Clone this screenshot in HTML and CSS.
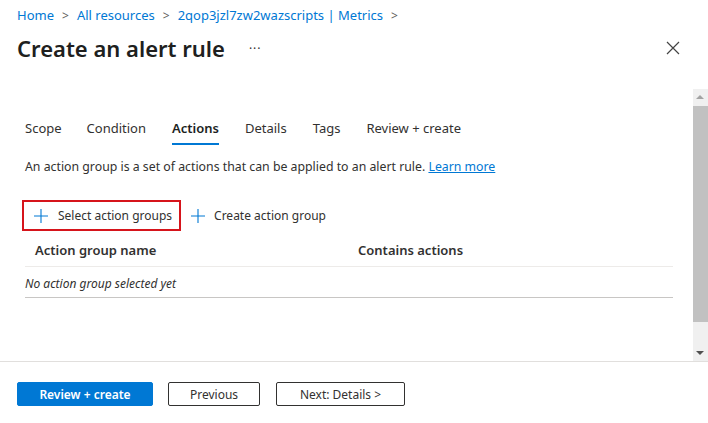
FILE: index.html
```html
<!DOCTYPE html>
<html>
<head>
<meta charset="utf-8">
<link rel="stylesheet" href="styles.css">
</head>
<body>
<div class="page">
  <header class="head">
    <nav class="crumbs">
      <a>Home</a><span class="sep">&gt;</span><a>All resources</a><span class="sep">&gt;</span><a>2qop3jzl7zw2wazscripts | Metrics</a><span class="sep">&gt;</span>
    </nav>
    <div class="titlebar">
      <h1 class="title">Create an alert rule</h1>
      <span class="more">···</span>
      <span class="spacer"></span>
      <svg class="close" width="14" height="14" viewBox="0 0 14 14"><path d="M1 1L13 13M13 1L1 13" stroke="#444" stroke-width="1.2" fill="none"/></svg>
    </div>
  </header>
  <div class="body">
    <main class="content">
      <div class="tabs">
        <span class="tab">Scope</span>
        <span class="tab">Condition</span>
        <span class="tab active">Actions</span>
        <span class="tab">Details</span>
        <span class="tab">Tags</span>
        <span class="tab">Review + create</span>
      </div>
      <p class="desc">An action group is a set of actions that can be applied to an alert rule. <a class="link">Learn more</a></p>
      <div class="toolbar">
        <span class="cmd highlighted">
          <svg width="14" height="14" viewBox="0 0 14 14"><path d="M7 0V14M0 7H14" stroke="#0078d4" stroke-width="1.1"/></svg>
          Select action groups
        </span>
        <span class="cmd">
          <svg width="14" height="14" viewBox="0 0 14 14"><path d="M7 0V14M0 7H14" stroke="#0078d4" stroke-width="1.1"/></svg>
          Create action group
        </span>
      </div>
      <div class="grid">
        <div class="row hdr">
          <span class="c1">Action group name</span>
          <span class="c2">Contains actions</span>
        </div>
        <div class="row empty">
          <span class="c1">No action group selected yet</span>
        </div>
      </div>
    </main>
    <div class="scrollbar">
      <div class="arrow up"></div>
      <div class="thumb"></div>
      <div class="track"></div>
      <div class="arrow down"></div>
    </div>
  </div>
  <footer class="foot">
    <button class="btn primary">Review + create</button>
    <button class="btn prev">Previous</button>
    <button class="btn next">Next: Details &gt;</button>
  </footer>
</div>
</body>
</html>
```
FILE: styles.css
```css
* { box-sizing: border-box; }
html, body { margin: 0; padding: 0; background: #fff; }
body {
  font-family: "Noto Sans", "Open Sans", "Liberation Sans", sans-serif;
  font-size: 13px;
  color: #323130;
}
.page { width: 708px; height: 423px; display: flex; flex-direction: column; overflow: hidden; }

.head { height: 89px; padding: 4px 0 0 17px; }
.crumbs { display: flex; align-items: center; height: 22px; color: #0078d4; font-size: 13px; }
.crumbs a { color: #0078d4; }
.crumbs .sep { color: #605e5c; margin: 0 8px; font-size: 12px; }
.titlebar { display: flex; align-items: center; height: 42px; margin-top: 1px; padding-right: 28px; }
.title { margin: 0; font-size: 22px; font-weight: 600; color: #201f1e; letter-spacing: 0; }
.more { margin-left: 24px; font-size: 12px; color: #323130; letter-spacing: 1px; }
.spacer { flex: 1; }
.close { display: block; }

.body { flex: 1; display: flex; min-height: 0; }
.content { flex: 1; padding: 21px 20px 0 25px; }
.scrollbar { width: 15px; display: flex; flex-direction: column; background: #f0f0f0; }
.arrow { height: 17px; position: relative; }
.arrow.up::after, .arrow.down::after {
  content: ""; position: absolute; left: 3px; width: 0; height: 0;
  border-left: 4px solid transparent; border-right: 4px solid transparent;
}
.arrow.up::after { top: 6px; border-bottom: 4px solid #a3a3a3; }
.arrow.down::after { top: 7px; border-top: 4px solid #505050; }
.thumb { height: 216px; background: #c1c1c1; }
.track { flex: 1; }

.tabs { display: flex; gap: 0; height: 35px; }
.tab { padding: 9px 0 0; margin-right: 26px; position: relative; color: #323130; }
.tab:first-child { margin-right: 25px; }
.tab.active { font-weight: 600; color: #201f1e; }
.tab.active::after {
  content: ""; position: absolute; left: 0; right: 0; bottom: 0; height: 2px; background: #0078d4;
}
.desc { margin: 14px 0 0; font-size: 12.3px; line-height: 16px; color: #323130; }
.link { color: #0078d4; text-decoration: underline; }

.toolbar { display: flex; align-items: center; margin-top: 25px; margin-left: -3px; height: 31px; }
.cmd { display: flex; align-items: center; gap: 10px; height: 31px; padding: 0 7px 0 10px; color: #323130; font-size: 12px; border: 2px solid transparent; }
.cmd.highlighted { border-color: #d6141b; }
.cmd + .cmd { padding-left: 8px; gap: 9px; }
.cmd svg { display: block; }

.grid { margin-top: 3px; margin-right: 0; }
.row { display: flex; align-items: center; border-bottom: 1px solid #edebe9; }
.row .c1 { width: 333px; padding-left: 10px; }
.row.hdr { font-weight: 600; color: #323130; height: 33px; padding-top: 0; }
.row.empty { font-style: italic; font-size: 12px; height: 31px; padding-top: 2px; border-bottom-color: #c8c6c4; }
.row.empty .c1 { padding-left: 0; width: auto; }

.foot { height: 62px; border-top: 1px solid #e1dfdd; display: flex; align-items: flex-start; padding: 20px 0 0 17px; gap: 0; }
.btn {
  font-family: inherit; font-size: 12px; height: 24px; border-radius: 2px; padding: 0;
  display: flex; align-items: center; justify-content: center; cursor: pointer;
}
.btn.primary { width: 136px; background: #0078d4; border: 1px solid #0078d4; color: #fff; font-weight: 600; }
.btn.prev { width: 92px; margin-left: 15px; background: #fff; border: 1px solid #323130; color: #323130; }
.btn.next { width: 129px; margin-left: 16px; background: #fff; border: 1px solid #323130; color: #323130; }
```
